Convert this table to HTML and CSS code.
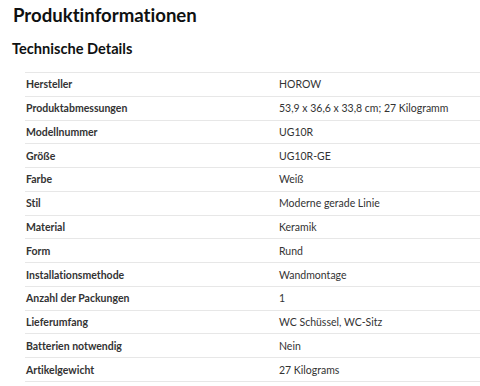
FILE: index.html
```html
<!DOCTYPE html>
<html lang="de">
<head>
<meta charset="utf-8">
<link rel="stylesheet" href="styles.css">
</head>
<body>
<div class="page">
  <h1 class="title">Produktinformationen</h1>
  <h2 class="subtitle">Technische Details</h2>
  <div class="specs">
    <div class="row"><div class="label">Hersteller</div><div class="value">HOROW</div></div>
    <div class="row"><div class="label">Produktabmessungen</div><div class="value">53,9 x 36,6 x 33,8 cm; 27 Kilogramm</div></div>
    <div class="row"><div class="label">Modellnummer</div><div class="value">UG10R</div></div>
    <div class="row"><div class="label">Größe</div><div class="value">UG10R-GE</div></div>
    <div class="row"><div class="label">Farbe</div><div class="value">Weiß</div></div>
    <div class="row"><div class="label">Stil</div><div class="value">Moderne gerade Linie</div></div>
    <div class="row"><div class="label">Material</div><div class="value">Keramik</div></div>
    <div class="row"><div class="label">Form</div><div class="value">Rund</div></div>
    <div class="row"><div class="label">Installationsmethode</div><div class="value">Wandmontage</div></div>
    <div class="row"><div class="label">Anzahl der Packungen</div><div class="value">1</div></div>
    <div class="row"><div class="label">Lieferumfang</div><div class="value">WC Schüssel, WC-Sitz</div></div>
    <div class="row"><div class="label">Batterien notwendig</div><div class="value">Nein</div></div>
    <div class="row"><div class="label">Artikelgewicht</div><div class="value">27 Kilograms</div></div>
  </div>
</div>
</body>
</html>
```
FILE: styles.css
```css
html, body {
  margin: 0;
  padding: 0;
  background: #ffffff;
}
body {
  font-family: "Lato", "Open Sans", sans-serif;
  font-variant-ligatures: none;
  color: #0f1111;
}
.page {
  padding: 3px 0 0 13px;
}
.title {
  margin: 0;
  font-size: 18.6px;
  line-height: 24px;
  font-weight: 700;
  color: #0f1111;
}
.subtitle {
  margin: 12px 0 0 -1px;
  font-size: 14.6px;
  line-height: 20px;
  font-weight: 700;
  color: #0f1111;
}
.specs {
  margin: 13px 0 0 12px;
  border-top: 1px solid #e7e7e7;
}
.row {
  display: grid;
  grid-template-columns: 253px 1fr;
  height: 22.77px;
  align-items: center;
  border-bottom: 1px solid #e7e7e7;
  font-size: 10.5px;
  color: #333333;
}
.label {
  padding-left: 1px;
  font-weight: 700;
}
.value {
  padding-left: 1px;
  font-weight: 400;
}
```
